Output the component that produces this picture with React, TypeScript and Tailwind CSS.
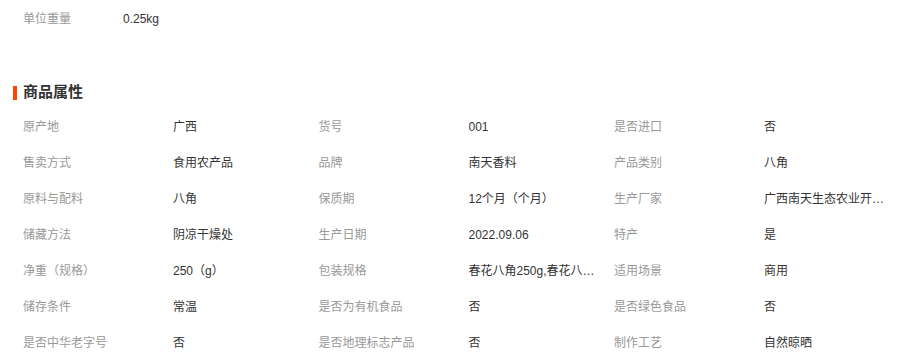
const rows: [string, string][][] = [
  [["原产地", "广西"], ["货号", "001"], ["是否进口", "否"]],
  [["售卖方式", "食用农产品"], ["品牌", "南天香料"], ["产品类别", "八角"]],
  [["原料与配料", "八角"], ["保质期", "12个月（个月）"], ["生产厂家", "广西南天生态农业开发有限公司"]],
  [["储藏方法", "阴凉干燥处"], ["生产日期", "2022.09.06"], ["特产", "是"]],
  [["净重（规格）", "250（g）"], ["包装规格", "春花八角250g,春花八角500g"], ["适用场景", "商用"]],
  [["储存条件", "常温"], ["是否为有机食品", "否"], ["是否绿色食品", "否"]],
  [["是否中华老字号", "否"], ["是否地理标志产品", "否"], ["制作工艺", "自然晾晒"]],
];

export default function App() {
  return (
    <div
      className="w-[923px] h-[362px] overflow-hidden bg-white pt-[1px] text-[12px]"
      style={{ fontFamily: '"Liberation Sans", "Noto Sans CJK SC", sans-serif' }}
    >
      <div className="flex h-[36px] items-center pl-[23px]">
        <span className="w-[100px] text-[#999]">单位重量</span>
        <span className="text-[#333]">0.25kg</span>
      </div>

      {/* 商品属性 */}
      <div className="mt-[39px] flex h-[33px] items-center pl-[13px]">
        <span className="mr-[6px] h-[14px] w-[4px] bg-[#ff4400]" />
        <h2 className="text-[15px] font-bold text-[#333]">商品属性</h2>
      </div>

      <div className="pl-[23px]">
        {rows.map((row, i) => (
          <div key={i} className="flex h-[36px] items-center">
            {row.map(([label, value]) => (
              <div key={label} className="flex w-[295.5px] items-center">
                <span className="w-[150px] shrink-0 truncate text-[#999]">{label}</span>
                <span className="w-[128px] truncate text-[#333]">{value}</span>
              </div>
            ))}
          </div>
        ))}
      </div>
    </div>
  );
}
